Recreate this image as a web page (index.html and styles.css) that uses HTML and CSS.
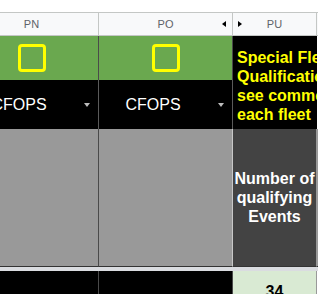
FILE: index.html
```html
<!DOCTYPE html>
<html lang="en">
<head>
    <meta charset="UTF-8">
    <meta name="viewport" content="width=device-width, initial-scale=1.0">
    <title>Fleet sheet</title>
    <link rel="stylesheet" href="styles.css">
</head>
<body>

<div class="topbar"></div>

<div class="grid">
    <!-- column letters -->
    <div class="col-head">PN</div>
    <div class="col-head">PO<span class="hide-left"></span></div>
    <div class="col-head"><span class="hide-right"></span>PU</div>
    <div class="col-head"></div>

    <!-- checkbox row -->
    <div class="cell green"><span class="checkbox"></span></div>
    <div class="cell green"><span class="checkbox"></span></div>
    <div class="cell note">
        <span>Special Fleet</span>
        <span>Qualification</span>
        <span>see comments for</span>
        <span>each fleet</span>
    </div>
    <div class="cell blank"></div>

    <!-- dropdown row -->
    <div class="cell chip">CFOPS<span class="arrow"></span></div>
    <div class="cell chip">CFOPS<span class="arrow"></span></div>
    <div class="cell blank"></div>

    <!-- label row -->
    <div class="cell gray"></div>
    <div class="cell gray last"></div>
    <div class="cell dark">
        <span>Number of</span>
        <span>qualifying</span>
        <span>Events</span>
    </div>
    <div class="cell gray"></div>

    <div class="freeze"></div>

    <div class="cell black"></div>
    <div class="cell black"></div>
    <div class="cell count">34</div>
    <div class="cell blank"></div>
</div>

</body>
</html>
```

FILE: styles.css
```css
body {
    margin: 0;
    background-color: #fff;
    font-family: "Liberation Sans", Arial, sans-serif;
    overflow: hidden;
}
.topbar {
    height: 12px;
    background-color: #fff;
}
.grid {
    display: grid;
    grid-template-columns: 134px 134px 84px 60px;
    grid-template-rows: 24px 43px 49px 138px 4px 40px;
    margin-left: -35px;
    border-top: 1px solid #c4c7c5;
}
.col-head {
    position: relative;
    background-color: #f8f9fa;
    color: #5f6368;
    font-size: 11px;
    display: flex;
    align-items: center;
    justify-content: center;
    border-right: 1px solid #c4c7c5;
    border-bottom: 1px solid #c4c7c5;
    box-sizing: border-box;
    height: 23px;
}
.hide-left, .hide-right {
    position: absolute;
    top: 8px;
    width: 0;
    height: 0;
    border-top: 3px solid transparent;
    border-bottom: 3px solid transparent;
}
.hide-left {
    right: 6px;
    border-right: 4px solid #000;
}
.hide-right {
    left: 5px;
    border-left: 4px solid #000;
}
.cell {
    box-sizing: border-box;
    border-right: 1px solid #4a4a4a;
}
.green {
    background-color: #6aa84f;
    display: flex;
    align-items: center;
    justify-content: center;
    margin-top: -1px;
}
.checkbox {
    width: 28px;
    height: 28px;
    box-sizing: border-box;
    border: 3px solid #ffff00;
    border-radius: 4px;
}
.note {
    grid-column: 3;
    grid-row: 2 / 4;
    background-color: #000;
    color: #ffff00;
    font-weight: bold;
    font-size: 16px;
    line-height: 19px;
    padding: 12px 0 0 4px;
    white-space: nowrap;
    overflow: hidden;
    display: flex;
    flex-direction: column;
    border-right: none;
    margin-top: -1px;
}
.blank {
    background-color: #fff;
    border-right: none;
}
.chip {
    position: relative;
    background-color: #000;
    color: #fff;
    font-size: 16px;
    display: flex;
    align-items: center;
    justify-content: center;
    padding-right: 25px;
    border-right-color: #5a5a5a;
}
.arrow {
    position: absolute;
    right: 8px;
    top: 23px;
    width: 0;
    height: 0;
    border-left: 3px solid transparent;
    border-right: 3px solid transparent;
    border-top: 4px solid #bdbdbd;
}
.gray {
    background-color: #999;
    border-bottom: 1px solid #333;
}
.gray.last {
    border-right-color: #c8c8c8;
}
.dark {
    background-color: #434343;
    color: #fff;
    font-weight: bold;
    font-size: 16px;
    line-height: 19px;
    white-space: nowrap;
    display: flex;
    flex-direction: column;
    align-items: center;
    justify-content: center;
    border-right-color: #999;
    border-bottom: 1px solid #333;
}
.freeze {
    grid-column: 1 / 5;
    background-color: #dadce0;
}
.black {
    background-color: #000;
}
.count {
    background-color: #d9ead3;
    color: #000;
    font-weight: bold;
    font-size: 16px;
    text-align: center;
    padding-top: 12px;
    border-right-color: #999;
}
```
